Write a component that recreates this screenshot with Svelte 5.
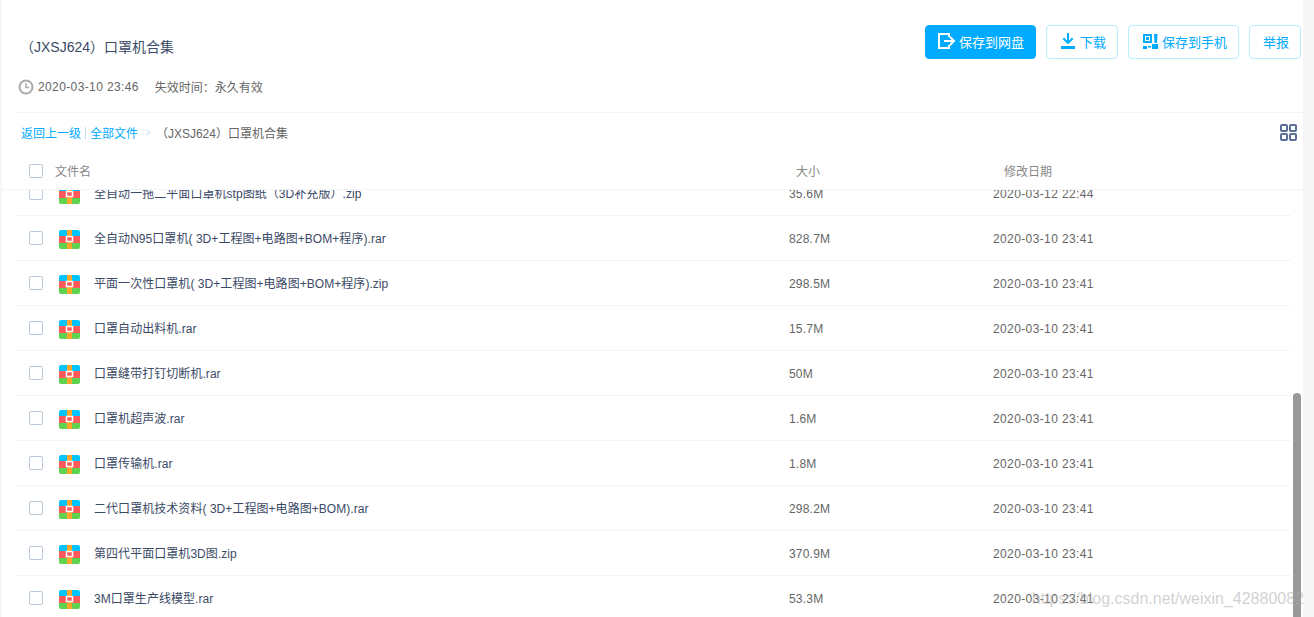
<script>
	const files = [
		{ name: '全自动一拖二平面口罩机stp图纸（3D补充版）.zip', size: '35.6M', date: '2020-03-12 22:44' },
		{ name: '全自动N95口罩机( 3D+工程图+电路图+BOM+程序).rar', size: '828.7M', date: '2020-03-10 23:41' },
		{ name: '平面一次性口罩机( 3D+工程图+电路图+BOM+程序).zip', size: '298.5M', date: '2020-03-10 23:41' },
		{ name: '口罩自动出料机.rar', size: '15.7M', date: '2020-03-10 23:41' },
		{ name: '口罩缝带打钉切断机.rar', size: '50M', date: '2020-03-10 23:41' },
		{ name: '口罩机超声波.rar', size: '1.6M', date: '2020-03-10 23:41' },
		{ name: '口罩传输机.rar', size: '1.8M', date: '2020-03-10 23:41' },
		{ name: '二代口罩机技术资料( 3D+工程图+电路图+BOM).rar', size: '298.2M', date: '2020-03-10 23:41' },
		{ name: '第四代平面口罩机3D图.zip', size: '370.9M', date: '2020-03-10 23:41' },
		{ name: '3M口罩生产线模型.rar', size: '53.3M', date: '2020-03-10 23:41' }
	];
</script>

<div class="card">
	<header class="top">
		<h1>（JXSJ624）口罩机合集</h1>
		<div class="actions">
			<button class="btn primary">
				<svg width="18" height="16" viewBox="0 0 18 16" fill="none" stroke="#fff" stroke-width="2">
					<path d="M11 4V1H1v14h10v-3M6 8h10M12 4l4 4-4 4" />
				</svg>
				<span>保存到网盘</span>
			</button>
			<button class="btn dl">
				<svg width="14" height="16" viewBox="0 0 14 16" fill="#00aaff">
					<path d="M6 0h2v7.500l3-3 1.400 1.400L7 11.300 1.600 5.900 3 4.500l3 3z" />
					<rect y="13" width="14" height="3" />
				</svg>
				<span>下载</span>
			</button>
			<button class="btn phone">
				<svg width="15" height="15" viewBox="0 0 15 15" fill="#00aaff">
					<path d="M0 0h9v9H0zM2 2v5h5V2z" fill-rule="evenodd" />
					<rect x="3" y="3" width="3" height="3" />
					<path d="M11 0h3.500l-.5 9h-2.500z" />
					<rect x="0" y="12" width="4" height="3" />
					<rect x="5" y="12" width="3" height="1.500" />
					<rect x="9" y="10" width="6" height="5" />
				</svg>
				<span>保存到手机</span>
			</button>
			<button class="btn report">举报</button>
		</div>
	</header>

	<div class="meta">
		<svg class="clock" width="16" height="16" viewBox="0 0 16 16" fill="none" stroke="#aaa" stroke-width="2">
			<circle cx="8" cy="8" r="6.500" />
			<path d="M8 4v4.500h3" stroke-width="1.500" />
		</svg>
		<span class="stamp">2020-03-10 23:46</span>
		<span class="expire">失效时间：永久有效</span>
	</div>

	<nav class="crumbs">
		<a href="#back">返回上一级</a>
		<i class="sep"></i>
		<a href="#all">全部文件</a>
		<span class="arrow">&gt;</span>
		<span class="here">（JXSJ624）口罩机合集</span>
		<svg class="grid" width="17" height="17" viewBox="0 0 17 17" fill="none" stroke="#5a6f96" stroke-width="2">
			<rect x="1" y="1" width="6" height="6" rx="1" />
			<rect x="10" y="1" width="6" height="6" rx="1" />
			<rect x="1" y="10" width="6" height="6" rx="1" />
			<rect x="10" y="10" width="6" height="6" rx="1" />
		</svg>
	</nav>

	<div class="thead">
		<span class="check"></span>
		<span class="th-name">文件名</span>
		<span class="th-size">大小</span>
		<span class="th-date">修改日期</span>
	</div>

	<div class="list">
		{#each files as file}
			<div class="row">
				<span class="check"></span>
				<svg class="zip" width="21" height="19" viewBox="0 0 21 19">
					<path d="M2 0h17a2 2 0 0 1 2 2v4H0V2a2 2 0 0 1 2-2z" fill="#00c4ff" />
					<rect y="6" width="21" height="7" fill="#ff5a5a" />
					<path d="M0 13h21v4a2 2 0 0 1-2 2H2a2 2 0 0 1-2-2z" fill="#5fd34f" />
					<rect x="8" width="5" height="19" fill="#ffa62b" />
					<rect x="7.500" y="6.500" width="6" height="5" fill="#ff5a5a" stroke="#fff" stroke-width="1.500" />
				</svg>
				<span class="name">{file.name}</span>
				<span class="size">{file.size}</span>
				<span class="date">{file.date}</span>
			</div>
		{/each}
		<div class="thumb"></div>
	</div>

	<div class="mark">https://blog.csdn.net/weixin_42880082</div>
</div>

<style>
	:global(body) {
		background: #f6f6f7;
		overflow: hidden;
	}

	.card {
		position: relative;
		box-sizing: border-box;
		width: 1301px;
		height: 617px;
		margin-left: 2px;
		padding-left: 12px;
		background: #fff;
		font-family: "Liberation Sans", "Noto Sans CJK SC", sans-serif;
		font-size: 12px;
		color: #666;
	}

	.top {
		display: flex;
		justify-content: space-between;
		padding: 25px 2px 0 6px;
		height: 34px;
	}

	h1 {
		margin: 14px 0 0;
		font-size: 14px;
		font-weight: 400;
		line-height: 17px;
		color: #3b4a66;
	}

	.actions {
		display: flex;
		gap: 10px;
	}

	.btn {
		display: flex;
		align-items: center;
		box-sizing: border-box;
		height: 34px;
		padding: 0 0 2px;
		border: 1px solid #b8ecff;
		border-radius: 4px;
		background: #fff;
		color: #00aaff;
		font: inherit;
		font-size: 13px;
	}

	.primary {
		width: 111px;
		gap: 3px;
		padding-left: 12px;
		border-color: #00aaff;
		background: #00aaff;
		color: #fff;
	}

	.dl {
		width: 72px;
		gap: 5px;
		padding-left: 14px;
	}

	.phone {
		width: 111px;
		gap: 4px;
		padding-left: 14px;
	}

	.report {
		width: 52px;
		padding-left: 13px;
	}

	.meta {
		display: flex;
		align-items: center;
		height: 51px;
		padding: 2px 0 0 4px;
		border-bottom: 1px solid #f3f4f6;
		color: #666;
	}

	.stamp {
		margin-left: 4px;
		letter-spacing: 0.38px;
	}

	.expire {
		margin-left: 16px;
	}

	.crumbs {
		display: flex;
		align-items: center;
		height: 39px;
		padding: 0 6px 0 7px;
		color: #666;
	}

	.crumbs a {
		color: #00aaff;
		text-decoration: none;
	}

	.sep {
		width: 1px;
		height: 12px;
		margin: 0 4px;
		background: #c5d9e8;
	}

	.arrow {
		margin-left: 7px;
		color: #c5e2f5;
		font-size: 10px;
	}

	.here {
		margin-left: 5px;
	}

	.grid {
		margin-left: auto;
	}

	.thead {
		display: flex;
		align-items: center;
		height: 37px;
		border-bottom: 1px solid #f3f4f6;
		color: #888;
		margin-left: -12px;
		padding-left: 27px;
	}

	.check {
		flex: none;
		box-sizing: border-box;
		width: 14px;
		height: 14px;
		border: 1px solid #b9c7d6;
		border-radius: 2px;
		background: #fff;
	}

	.th-name {
		margin-left: 12px;
		width: 741px;
	}

	.th-size {
		width: 208px;
	}

	.list {
		position: relative;
		height: 427px;
		overflow: hidden;
	}

	.row {
		display: flex;
		align-items: center;
		box-sizing: border-box;
		width: 1277px;
		height: 45px;
		padding-left: 15px;
		border-bottom: 1px solid #f1f4f8;
		color: #666;
	}

	.row:first-child {
		margin-top: -19px;
	}

	.zip {
		flex: none;
		margin: 2px 0 0 16px;
	}

	.name {
		width: 695px;
		margin-left: 14px;
		padding-bottom: 2px;
		color: #3b4a66;
		letter-spacing: 0.05px;
	}

	.size {
		width: 204px;
		padding-top: 2px;
		letter-spacing: 0.2px;
	}

	.date {
		padding-top: 2px;
		letter-spacing: 0.38px;
	}

	.thumb {
		position: absolute;
		top: 203px;
		right: 2px;
		width: 8px;
		height: 240px;
		border-radius: 4px;
		background: #999;
	}

	.mark {
		position: absolute;
		right: -1px;
		bottom: 9px;
		font-size: 16px;
		font-family: "Liberation Sans", sans-serif;
		color: rgba(170, 170, 170, 0.55);
	}
</style>
